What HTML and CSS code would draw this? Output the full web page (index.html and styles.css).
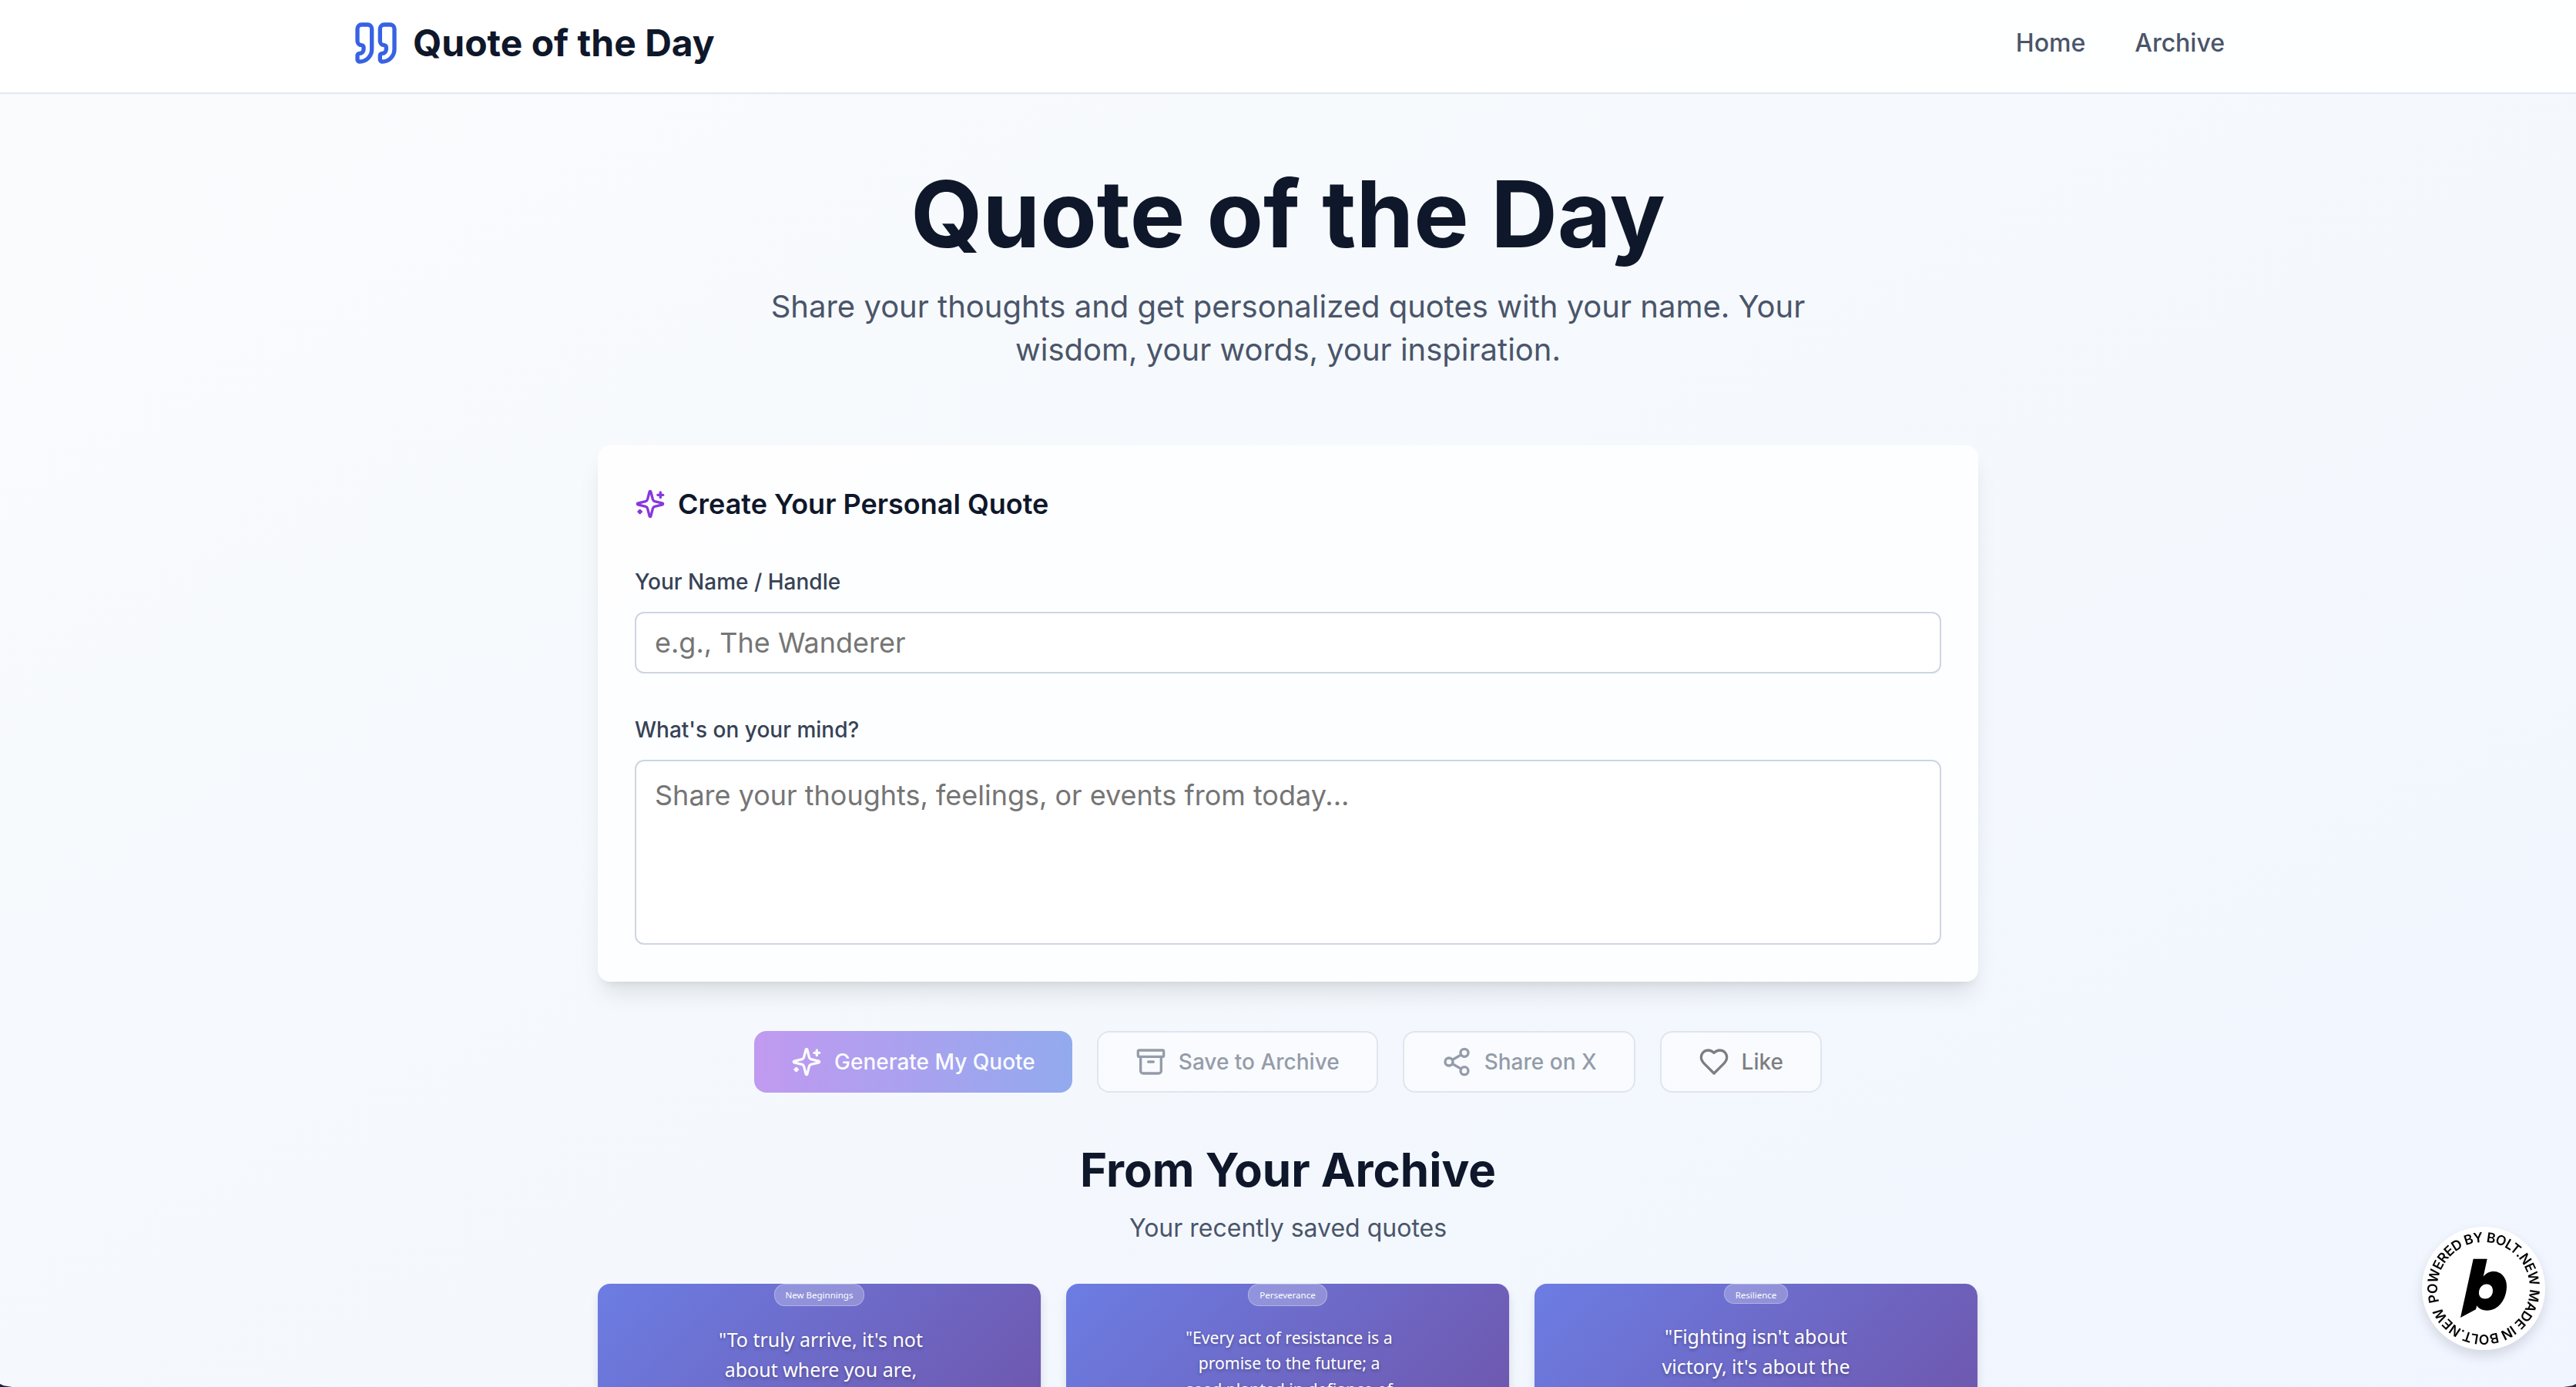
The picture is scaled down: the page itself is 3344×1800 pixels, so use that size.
FILE: index.html
```html
<!DOCTYPE html>
<html lang="en">
<head>
    <meta charset="UTF-8">
    <meta name="viewport" content="width=device-width, initial-scale=1.0">
    <title>Quote of the Day</title>
    <link rel="stylesheet" href="styles.css">
</head>
<body>

<!-- Shared icons -->
<svg class="icon-defs" width="0" height="0">
    <symbol id="icon-sparkles" viewBox="0 0 24 24">
        <path d="M9.937 15.5A2 2 0 0 0 8.5 14.063l-6.135-1.582a.5.5 0 0 1 0-.962L8.5 9.936A2 2 0 0 0 9.937 8.5l1.582-6.135a.5.5 0 0 1 .963 0L14.063 8.5A2 2 0 0 0 15.5 9.937l6.135 1.581a.5.5 0 0 1 0 .964L15.5 14.063a2 2 0 0 0-1.437 1.437l-1.582 6.135a.5.5 0 0 1-.963 0z"/>
        <path d="M20 3v4"/>
        <path d="M22 5h-4"/>
        <path d="M4 17v2"/>
        <path d="M5 18H3"/>
    </symbol>
</svg>

<!-- Header -->
<header class="header">
    <div class="header-inner">
        <a class="brand" href="#">
            <svg class="icon brand-icon" viewBox="0 0 24 24">
                <path d="M16 3a2 2 0 0 0-2 2v6a2 2 0 0 0 2 2 1 1 0 0 1 1 1v1a2 2 0 0 1-2 2 1 1 0 0 0-1 1v2a1 1 0 0 0 1 1 6 6 0 0 0 6-6V5a2 2 0 0 0-2-2z"/>
                <path d="M5 3a2 2 0 0 0-2 2v6a2 2 0 0 0 2 2 1 1 0 0 1 1 1v1a2 2 0 0 1-2 2 1 1 0 0 0-1 1v2a1 1 0 0 0 1 1 6 6 0 0 0 6-6V5a2 2 0 0 0-2-2z"/>
            </svg>
            <span>Quote of the Day</span>
        </a>
        <nav class="nav">
            <a href="#">Home</a>
            <a href="#">Archive</a>
        </nav>
    </div>
</header>

<main class="main">
    <section class="hero">
        <h1>Quote of the Day</h1>
        <p>Share your thoughts and get personalized quotes with your name. Your wisdom, your words, your inspiration.</p>
    </section>

    <!-- Quote form -->
    <form class="form-card">
        <h2 class="form-title">
            <svg class="icon"><use href="#icon-sparkles"/></svg>
            Create Your Personal Quote
        </h2>
        <label for="name">Your Name / Handle</label>
        <input type="text" id="name" placeholder="e.g., The Wanderer">
        <label for="mind">What's on your mind?</label>
        <textarea id="mind" placeholder="Share your thoughts, feelings, or events from today..."></textarea>
    </form>

    <div class="actions">
        <button class="btn btn-primary" disabled>
            <svg class="icon"><use href="#icon-sparkles"/></svg>
            Generate My Quote
        </button>
        <button class="btn" disabled>
            <svg class="icon" viewBox="0 0 24 24">
                <rect width="20" height="5" x="2" y="3" rx="1"/>
                <path d="M4 8v11a2 2 0 0 0 2 2h12a2 2 0 0 0 2-2V8"/>
                <path d="M10 12h4"/>
            </svg>
            Save to Archive
        </button>
        <button class="btn" disabled>
            <svg class="icon" viewBox="0 0 24 24">
                <circle cx="18" cy="5" r="3"/>
                <circle cx="6" cy="12" r="3"/>
                <circle cx="18" cy="19" r="3"/>
                <path d="M8.59 13.51l6.83 3.98"/>
                <path d="M15.41 6.51l-6.82 3.98"/>
            </svg>
            Share on X
        </button>
        <button class="btn btn-like" disabled>
            <svg class="icon" viewBox="0 0 24 24">
                <path d="M19 14c1.49-1.46 3-3.21 3-5.5A5.5 5.5 0 0 0 16.5 3c-1.76 0-3 .5-4.5 2-1.5-1.5-2.74-2-4.5-2A5.5 5.5 0 0 0 2 8.5c0 2.3 1.5 4.05 3 5.5l7 7Z"/>
            </svg>
            Like
        </button>
    </div>

    <!-- Archive -->
    <section class="archive">
        <h2>From Your Archive</h2>
        <p class="archive-sub">Your recently saved quotes</p>
        <div class="archive-grid">
            <article class="quote-card">
                <span class="tag">New Beginnings</span>
                <p class="quote">"To truly arrive, it's not<br>about where you are,</p>
            </article>
            <article class="quote-card">
                <span class="tag">Perseverance</span>
                <p class="quote quote-small">"Every act of resistance is a<br>promise to the future; a<br>seed planted in defiance of</p>
            </article>
            <article class="quote-card">
                <span class="tag tag-short">Resilience</span>
                <p class="quote quote-high">"Fighting isn't about<br>victory, it's about the</p>
            </article>
        </div>
    </section>
</main>

<!-- Bolt badge -->
<a class="bolt-badge" href="#">
    <svg viewBox="0 0 160 160">
        <path id="ring" fill="none" d="M22.6 97.5A60 60 0 0 1 137.4 62.5A60 60 0 0 1 22.6 97.5"/>
        <text><textPath href="#ring" textLength="370">POWERED BY BOLT.NEW MADE IN BOLT.NEW</textPath></text>
        <path fill-rule="evenodd" d="M66.7 41.7H84.7L79.7 64.7C83 60.5 87.5 58 93 58C103 58 110 66 110 77C110 94 99.5 108.7 84.5 108.7C78.5 108.7 73.5 106.5 71.3 102.3L70 107.3L50 118ZM84 74.5C78.5 74.5 74.5 79 74 85C73.5 90 77 93.5 82 93.5C88 93.5 92 89 92 83C92 78 89 74.5 84 74.5Z"/>
    </svg>
</a>

<div class="corner corner-left"></div>
<div class="corner corner-right"></div>

</body>
</html>
```

FILE: styles.css
```css
* {
    box-sizing: border-box;
    margin: 0;
    padding: 0;
}

body {
    height: 1800px;
    overflow: hidden;
    font-family: Inter, "Liberation Sans", sans-serif;
    color: #0f172a;
    background: linear-gradient(to bottom right, #fafbfd, #f5f9fd 50%, #f0f5ff);
}

a {
    color: inherit;
    text-decoration: none;
}

.icon-defs {
    position: absolute;
}

.icon {
    width: 40px;
    height: 40px;
    flex-shrink: 0;
    fill: none;
    stroke: currentColor;
    stroke-width: 2;
    stroke-linecap: round;
    stroke-linejoin: round;
}

/* Header */
.header {
    height: 122px;
    background: rgba(255, 255, 255, 0.9);
    border-bottom: 2px solid #e2e8f0;
}

.header-inner {
    display: flex;
    justify-content: space-between;
    align-items: center;
    max-width: 2560px;
    height: 112px;
    margin: 0 auto;
    padding: 0 64px;
}

.brand {
    display: flex;
    align-items: center;
    gap: 16px;
    font-size: 48px;
    font-weight: 700;
}

.brand span {
    padding-bottom: 2px;
}

.brand-icon {
    width: 64px;
    height: 64px;
    color: #3762e3;
}

.nav {
    display: flex;
    gap: 64px;
    padding-bottom: 2px;
    font-size: 32px;
    font-weight: 500;
    color: #4a556a;
}

/* Hero */
.main {
    width: 1792px;
    margin: 0 auto;
    padding-top: 96px;
}

.hero {
    width: 1344px;
    margin: 0 auto 96px;
    text-align: center;
}

.hero h1 {
    margin-bottom: 32px;
    font-size: 120px;
    line-height: 120px;
    font-weight: 700;
}

.hero p {
    font-size: 40px;
    line-height: 56px;
    color: #4a556a;
}

/* Quote form */
.form-card {
    padding: 48px;
    height: 696px;
    border-radius: 16px;
    background: rgba(255, 255, 255, 0.8);
    box-shadow: 0 20px 30px -6px rgba(0, 0, 0, 0.1), 0 8px 12px -8px rgba(0, 0, 0, 0.1);
}

.form-title {
    display: flex;
    align-items: center;
    gap: 16px;
    margin-bottom: 48px;
    font-size: 36px;
    line-height: 56px;
    font-weight: 600;
}

.form-title .icon {
    color: #8638e0;
}

label {
    display: block;
    margin-bottom: 15px;
    padding-top: 1px;
    font-size: 28px;
    line-height: 48px;
    font-weight: 500;
    color: #364256;
}

input,
textarea {
    display: block;
    width: 100%;
    border: 2px solid #cdd5e3;
    border-radius: 12px;
    background: #fff;
    font-family: inherit;
    font-size: 36px;
    line-height: 56px;
    resize: none;
}

input {
    height: 80px;
    margin-bottom: 48px;
    padding: 0 24px;
}

textarea {
    height: 240px;
    padding: 16px 24px;
}

input::placeholder,
textarea::placeholder {
    color: #757575;
}

/* Buttons */
.actions {
    display: flex;
    justify-content: center;
    gap: 32px;
    margin: 64px 0;
}

.btn {
    display: flex;
    align-items: center;
    gap: 16px;
    height: 80px;
    padding: 0 48px;
    border: 2px solid #cdd5e3;
    border-radius: 16px;
    background: #fff;
    font-family: inherit;
    font-size: 28px;
    font-weight: 500;
    color: #364256;
    opacity: 0.5;
}

.btn-primary {
    border: none;
    background: linear-gradient(to right, #8d3ce3, #335ee1);
    color: #fff;
}

.btn-like {
    color: #080808;
}

/* Archive */
.archive {
    text-align: center;
}

.archive h2 {
    margin-bottom: 16px;
    font-size: 60px;
    line-height: 72px;
    font-weight: 700;
}

.archive-sub {
    margin-bottom: 48px;
    font-size: 32px;
    line-height: 48px;
    color: #4a556a;
}

.archive-grid {
    display: grid;
    grid-template-columns: repeat(3, 1fr);
    gap: 32px;
}

.quote-card {
    height: 320px;
    border-right: 1px solid #dfdfee;
    border-radius: 16px;
    background: linear-gradient(135deg, #6c7de3, #6f4fa2) padding-box;
    box-shadow: 0 8px 12px rgba(0, 0, 0, 0.1);
    font-family: "Noto Sans", sans-serif;
    color: #fff;
}

.tag {
    display: block;
    width: fit-content;
    height: 29px;
    margin: 0 auto;
    padding: 0 14px;
    border: 1px solid rgba(255, 255, 255, 0.3);
    border-radius: 14px;
    background: rgba(255, 255, 255, 0.25);
    font-size: 11.5px;
    line-height: 27px;
}

.tag-short {
    height: 26px;
}

.quote {
    margin-top: 24px;
    padding-left: 4px;
    font-size: 25px;
    line-height: 39.4px;
    text-shadow: 0 2px 4px rgba(0, 0, 0, 0.3);
}

.quote-small {
    font-size: 21.2px;
    line-height: 33.4px;
}

.quote-high {
    margin-top: 23px;
    padding-left: 0;
}

/* Bolt badge */
.bolt-badge {
    position: fixed;
    right: 40px;
    bottom: 48px;
    width: 160px;
    height: 160px;
    border-radius: 50%;
    background: #fff;
    box-shadow: 0 8px 16px rgba(0, 0, 0, 0.12);
}

.bolt-badge text {
    font-size: 17.6px;
    font-weight: 600;
}

/* Window corners */
.corner {
    position: fixed;
    bottom: 0;
    width: 16px;
    height: 4px;
    background: #14213f;
}

.corner-left {
    left: 0;
    clip-path: polygon(0 0, 30% 55%, 100% 100%, 0 100%);
}

.corner-right {
    right: 0;
    background: #2c2a4a;
    clip-path: polygon(100% 0, 70% 55%, 0 100%, 100% 100%);
}
```
